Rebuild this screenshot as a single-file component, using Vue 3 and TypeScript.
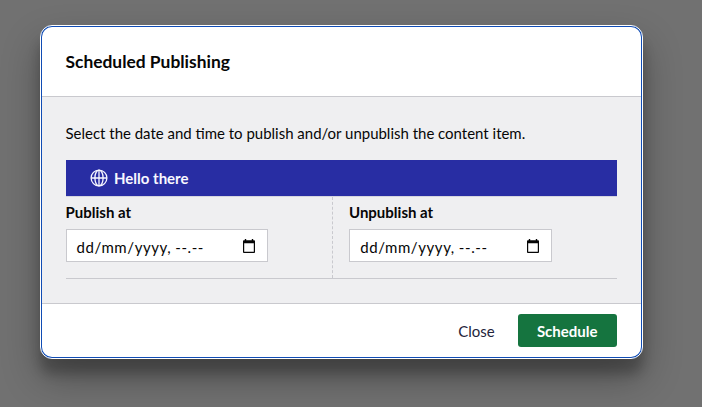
<script setup lang="ts">
interface DateField {
  id: string
  label: string
  date: string
  time: string
}

const fields: DateField[] = [
  { id: 'publish', label: 'Publish at', date: 'dd/mm/yyyy,', time: '--.--' },
  { id: 'unpublish', label: 'Unpublish at', date: 'dd/mm/yyyy,', time: '--.--' },
]
</script>

<template>
  <div class="backdrop">
    <section class="dialog" role="dialog" aria-labelledby="dialog-title">
      <header class="header">
        <h3 id="dialog-title" class="title">Scheduled Publishing</h3>
      </header>
      <div class="body">
        <p class="intro">Select the date and time to publish and/or unpublish the content item.</p>
        <div class="variant">
          <svg class="globe" viewBox="0 0 18 18" fill="none" stroke="currentColor" stroke-width="1.3">
            <circle cx="9" cy="9" r="7.9" />
            <ellipse cx="9" cy="9" rx="4.1" ry="7.9" />
            <path d="M1.1 9H16.9M9 1.1V16.9" />
          </svg>
          <span class="name">Hello there</span>
        </div>
        <div class="dates">
          <div v-for="field in fields" :key="field.id" class="cell">
            <span class="label">{{ field.label }}</span>
            <div class="input" tabindex="0">
              <span class="date">{{ field.date }}</span>
              <span class="time">{{ field.time }}</span>
              <svg class="calendar" viewBox="0 0 12 14">
                <path fill="currentColor" fill-rule="evenodd" d="M1.8 0H3.2V1.2H8.8V0H10.2V1.2H11.1Q12 1.2 12 2.1V13.1Q12 14 11.1 14H.9Q0 14 0 13.1V2.1Q0 1.2 .9 1.2H1.8ZM1.2 4.3V12.8H10.8V4.3Z" />
              </svg>
            </div>
          </div>
        </div>
      </div>
      <footer class="footer">
        <button class="button close" type="button">Close</button>
        <button class="button schedule" type="button">Schedule</button>
      </footer>
    </section>
  </div>
</template>

<style>
body {
  margin: 0;
  overflow: hidden;
}
</style>

<style scoped>
.backdrop {
  box-sizing: border-box;
  width: 702px;
  height: 407px;
  padding: 25px 59px 48px 40px;
  overflow: hidden;
  background: #717171;
  color: #060606;
  font-family: Lato, "Liberation Sans", sans-serif;
  font-size: 15px;
  line-height: 20px;
}

.dialog {
  box-sizing: border-box;
  display: flex;
  flex-direction: column;
  width: 603px;
  height: 334px;
  border: 1px solid #fff;
  border-radius: 12px;
  padding: 1px;
  background: #104cb4;
  box-shadow: 0 19px 38px rgba(0, 0, 0, 0.3), 0 15px 12px rgba(0, 0, 0, 0.22);
}

.header {
  box-sizing: border-box;
  display: flex;
  align-items: center;
  height: 70px;
  padding: 0 24px;
  border-bottom: 1px solid #c9c9ce;
  border-radius: 10px 10px 0 0;
  background: #fff;
}

.title {
  margin: 0 0 0 -0.5px;
  font-size: 17.4px;
  font-weight: 700;
}

.body {
  box-sizing: border-box;
  height: 206px;
  padding: 26px 24px 24px;
  background: #efeff1;
}

.intro {
  margin: 0 0 17px -0.5px;
  font-size: 14.98px;
  white-space: nowrap;
}

.variant {
  box-sizing: border-box;
  display: flex;
  align-items: center;
  gap: 6px;
  height: 36px;
  padding-left: 24px;
  background: #282da3;
  color: #f8f8ff;
}

.globe {
  width: 18px;
  height: 18px;
}

.name {
  font-weight: 700;
}

.dates {
  box-sizing: border-box;
  display: grid;
  grid-template-columns: 267px 1fr;
  height: 83px;
  border-top: 1px solid #d5d5df;
  border-bottom: 1px solid #c9c9ce;
}

.cell {
  padding-top: 5px;
}

.cell:first-child {
  border-right: 1px dashed #c9c9ce;
}

.cell:last-child {
  padding-left: 16px;
}

.label {
  display: block;
  margin-left: -0.4px;
  font-weight: 700;
}

.cell:last-child .label {
  margin-left: 0;
}

.input {
  box-sizing: border-box;
  display: flex;
  align-items: center;
  width: 202px;
  height: 33px;
  margin-top: 7px;
  padding: 2px 12px 0 9.6px;
  border: 1px solid #c9c9ce;
  background: #fff;
  letter-spacing: 0.57px;
}

.cell:last-child .input {
  width: 203px;
  padding-left: 10.2px;
}

.time {
  margin-left: 4px;
}

.calendar {
  width: 12px;
  height: 14px;
  margin-left: auto;
  margin-bottom: 1px;
}

.footer {
  box-sizing: border-box;
  display: flex;
  justify-content: flex-end;
  align-items: flex-start;
  height: 54px;
  padding: 10px 24px 0;
  border-top: 1px solid #c9c9ce;
  border-radius: 0 0 10px 10px;
  background: #fff;
}

.button {
  height: 33px;
  padding: 1px 0 0;
  border: 0;
  border-radius: 3px;
  font: inherit;
}

.close {
  width: 83px;
  background: transparent;
  color: #24243b;
}

.schedule {
  width: 99px;
  padding-right: 0.6px;
  background: #15743f;
  color: #fff;
  font-weight: 700;
}
</style>
